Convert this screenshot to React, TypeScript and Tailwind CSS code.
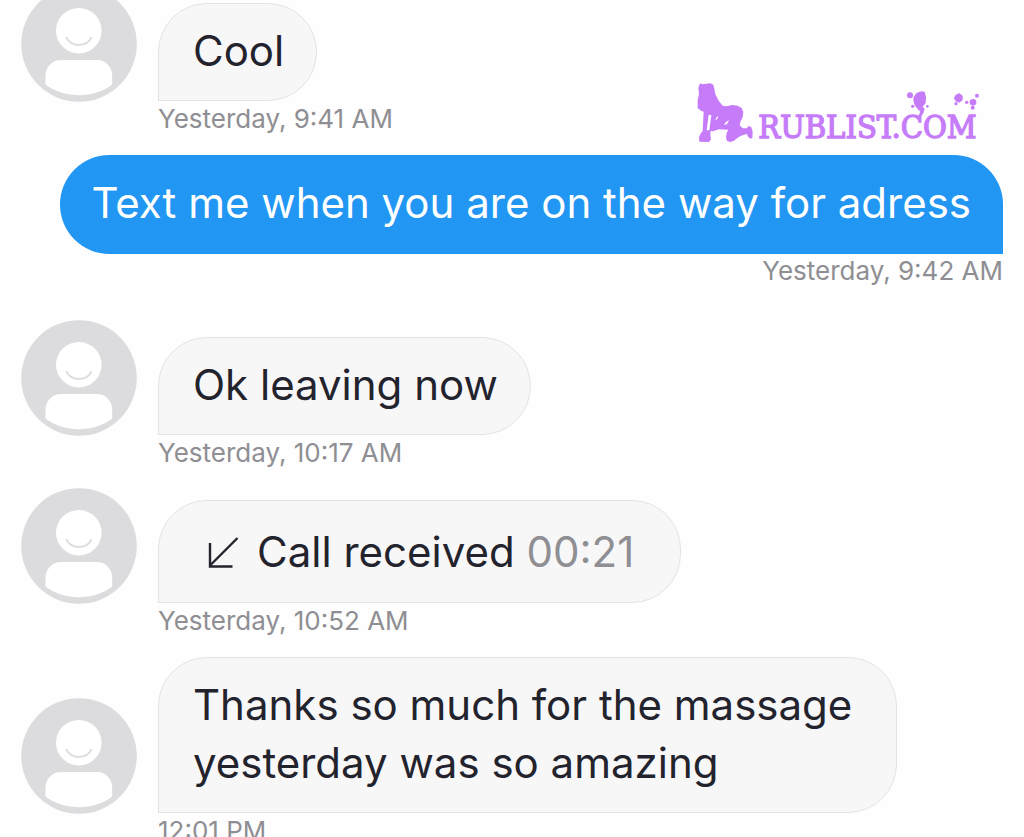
import { ReactNode } from "react";

type Message = {
  id: number;
  side: "in" | "out";
  time: string;
  content: ReactNode;
  bubble: string;
  spacing: string;
};

const Avatar = () => (
  <svg viewBox="0 0 116 116" className="size-[116px] shrink-0" role="img" aria-label="Contact">
    <circle cx="58" cy="58" r="57.8" fill="#dcdcde" />
    <circle cx="57.8" cy="44.7" r="22.8" fill="#fff" />
    <path d="M45.2 51.2C50 61.6 66 61.6 70.6 51.2" fill="none" stroke="#dcdcde" strokeWidth="1.9" />
    <path
      d="M24.5 98.5V90C24.5 81 31 74 40 74H76C85 74 91.2 81 91.2 90V98.5C82 105.5 70 109.3 58 109.3S34 105.5 24.5 98.5Z"
      fill="#fff"
    />
  </svg>
);

const CallArrow = () => (
  <svg viewBox="0 0 32 34" className="h-[34px] w-8" fill="none" stroke="#23232d" strokeWidth="2.4">
    <path d="M30.5 3L3 30.5M3 8V31.5H25.5" />
  </svg>
);

const Watermark = () => (
  <svg
    viewBox="0 0 900 225"
    className="absolute top-[75px] right-[34px] h-[75px] w-[300px]"
    fill="#c67cf9"
    role="img"
    aria-label="rublist.com"
  >
    <path
      fillRule="evenodd"
      d="M30 25L37 28L61 25L70 29L74 45L76 58L86 77L98 92L110 94L126 90L143 92L155 99L160 111L158 127L151 141L149 151L158 160L170 160L176 153L184 157L188 170L187 189L181 191L173 184L171 177L157 181L145 187L132 197L121 201L111 198L108 188L110 174L115 164L87 163L69 169L62 168L61 180L63 193L57 201L28 200L27 186L33 174L38 168L41 110L33 107L23 99L23 76L27 57L25 38ZM56 119L50 166L58 166L64 121ZM84 122L78 130L76 137L83 130ZM117 135L107 142L102 150L111 148Z"
    />
    <text
      x="205"
      y="188"
      fontSize="97"
      stroke="#c67cf9"
      strokeWidth="4"
      className="font-['DejaVu_Serif_Condensed','DejaVu_Serif',serif]"
    >
      RUBLIST.COM
    </text>
    <path d="M680 54L694 49L704 50L708 66L707 84L698 95L704 102L700 115L691 129L683 128L691 110L682 101L674 91L670 77L671 65Z" />
    <circle cx="660" cy="61" r="9" />
    <circle cx="668" cy="94" r="5" />
    <circle cx="712" cy="94" r="4" />
    <path d="M796 61L807 54L818 62L818 75L808 83L797 79L792 70Z" />
    <circle cx="849" cy="82" r="10" />
    <circle cx="861" cy="62" r="6" />
    <circle cx="830" cy="82" r="5" />
    <circle cx="798" cy="86" r="5" />
    <circle cx="848" cy="98" r="6" />
  </svg>
);

const messages: Message[] = [
  { id: 1, side: "in", time: "Yesterday, 9:41 AM", content: "Cool", bubble: "h-[98px] pb-[3px]", spacing: "" },
  {
    id: 2,
    side: "out",
    time: "Yesterday, 9:42 AM",
    content: "Text me when you are on the way for adress",
    bubble: "min-h-[99px] pb-[3px]",
    spacing: "mt-[19px]",
  },
  {
    id: 3,
    side: "in",
    time: "Yesterday, 10:17 AM",
    content: "Ok leaving now",
    bubble: "h-[98px] pb-[3px]",
    spacing: "mt-8",
  },
  {
    id: 4,
    side: "in",
    time: "Yesterday, 10:52 AM",
    content: (
      <span className="flex items-center px-[14px]">
        <CallArrow />
        <span className="ml-[18px]">
          Call received <span className="text-[#8e8e93]">00:21</span>
        </span>
      </span>
    ),
    bubble: "h-[103px]",
    spacing: "mt-[18px]",
  },
  {
    id: 5,
    side: "in",
    time: "12:01 PM",
    content: "Thanks so much for the massage yesterday was so amazing",
    bubble: "min-h-[156px] max-w-[739px] pb-[3px]",
    spacing: "mt-[19px]",
  },
];

const MessageRow = ({ message }: { message: Message }) => {
  if (message.side === "out") {
    return (
      <li className={`flex flex-col items-end ${message.spacing}`}>
        <p className={`flex items-center rounded-[50px] rounded-br-none bg-[#2296f3] px-8 text-white ${message.bubble}`}>
          {message.content}
        </p>
        <time className="text-[26px] leading-[34px] text-[#8e8e93]">{message.time}</time>
      </li>
    );
  }

  return (
    <li className={message.spacing}>
      <div className="flex items-end gap-[21px]">
        <Avatar />
        <div
          className={`mb-px flex items-center rounded-[49px] rounded-bl-none border border-[#e3e3e5] bg-[#f7f7f8] pr-8 pl-[34px] text-[#23232d] ${message.bubble}`}
        >
          {message.content}
        </div>
      </div>
      <time className="ml-[137px] block text-[26px] leading-[34px] text-[#8e8e93]">{message.time}</time>
    </li>
  );
};

export default function App() {
  return (
    <main className="relative h-screen overflow-hidden bg-[#fefefe] font-['Inter',sans-serif] text-[42px] leading-[58px]">
      <ul className="-mt-[14px] px-[21px]">
        {messages.map((message) => (
          <MessageRow key={message.id} message={message} />
        ))}
      </ul>
      <Watermark />
    </main>
  );
}
